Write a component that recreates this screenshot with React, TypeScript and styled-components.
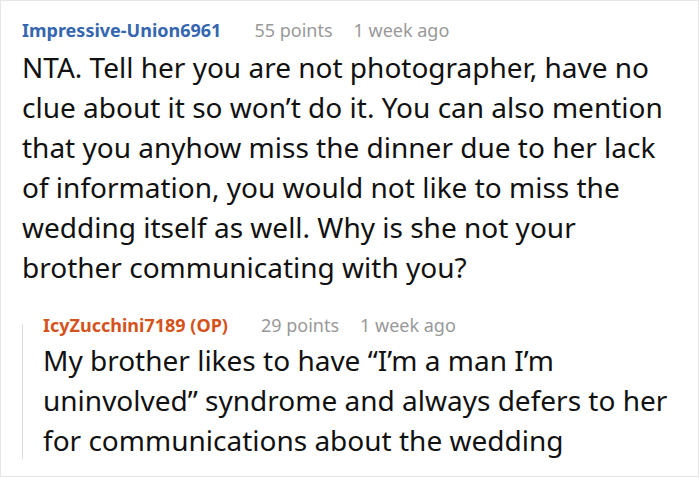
import React from 'react';
import styled, { createGlobalStyle } from 'styled-components';

const GlobalStyle = createGlobalStyle`
    html, body {
        margin: 0;
        padding: 0;
        background: #ffffff;
    }
    body {
        font-family: 'Noto Sans', 'Open Sans', sans-serif;
        color: #111111;
    }
`;

const Card = styled.div`
    box-sizing: border-box;
    width: 699px;
    height: 477px;
    border: 1px solid #e6e6e6;
    padding: 17px 26px 0 21px;
    overflow: hidden;
`;

const Comment = styled.div`
    display: flex;
    flex-direction: column;
`;

const Header = styled.div`
    display: flex;
    align-items: baseline;
    font-size: 18px;
    line-height: 24px;
    white-space: nowrap;
`;

const Author = styled.span<{ $op?: boolean }>`
    font-weight: 700;
    color: ${({ $op }) => ($op ? '#d4531c' : '#3566b0')};
    margin-right: 33px;
`;

const Meta = styled.span`
    color: #999999;
    & + & {
        margin-left: 21px;
    }
`;

const Body = styled.p<{ $gap: number }>`
    margin: ${({ $gap }) => $gap}px 0 0;
    font-size: 28px;
    line-height: 40px;
`;

const Reply = styled.div`
    display: flex;
    margin-top: 26px;
`;

const ThreadLine = styled.div`
    flex: 0 0 1px;
    background: #dcdcdc;
    margin: 11px 20px 1px 0;
`;

const App: React.FC = () => (
    <>
        <GlobalStyle />
        <Card>
            <Comment>
                <Header>
                    <Author>Impressive-Union6961</Author>
                    <Meta>55 points</Meta>
                    <Meta>1 week ago</Meta>
                </Header>
                <Body $gap={5}>
                    NTA. Tell her you are not photographer, have no clue about it so won’t do it. You can also
                    mention that you anyhow miss the dinner due to her lack of information, you would not like
                    to miss the wedding itself as well. Why is she not your brother communicating with you?
                </Body>
            </Comment>
            <Reply>
                <ThreadLine />
                <Comment>
                    <Header>
                        <Author $op>IcyZucchini7189 (OP)</Author>
                        <Meta>29 points</Meta>
                        <Meta>1 week ago</Meta>
                    </Header>
                    <Body $gap={3}>
                        My brother likes to have “I’m a man I’m uninvolved” syndrome and always defers to her for
                        communications about the wedding
                    </Body>
                </Comment>
            </Reply>
        </Card>
    </>
);

export default App;
